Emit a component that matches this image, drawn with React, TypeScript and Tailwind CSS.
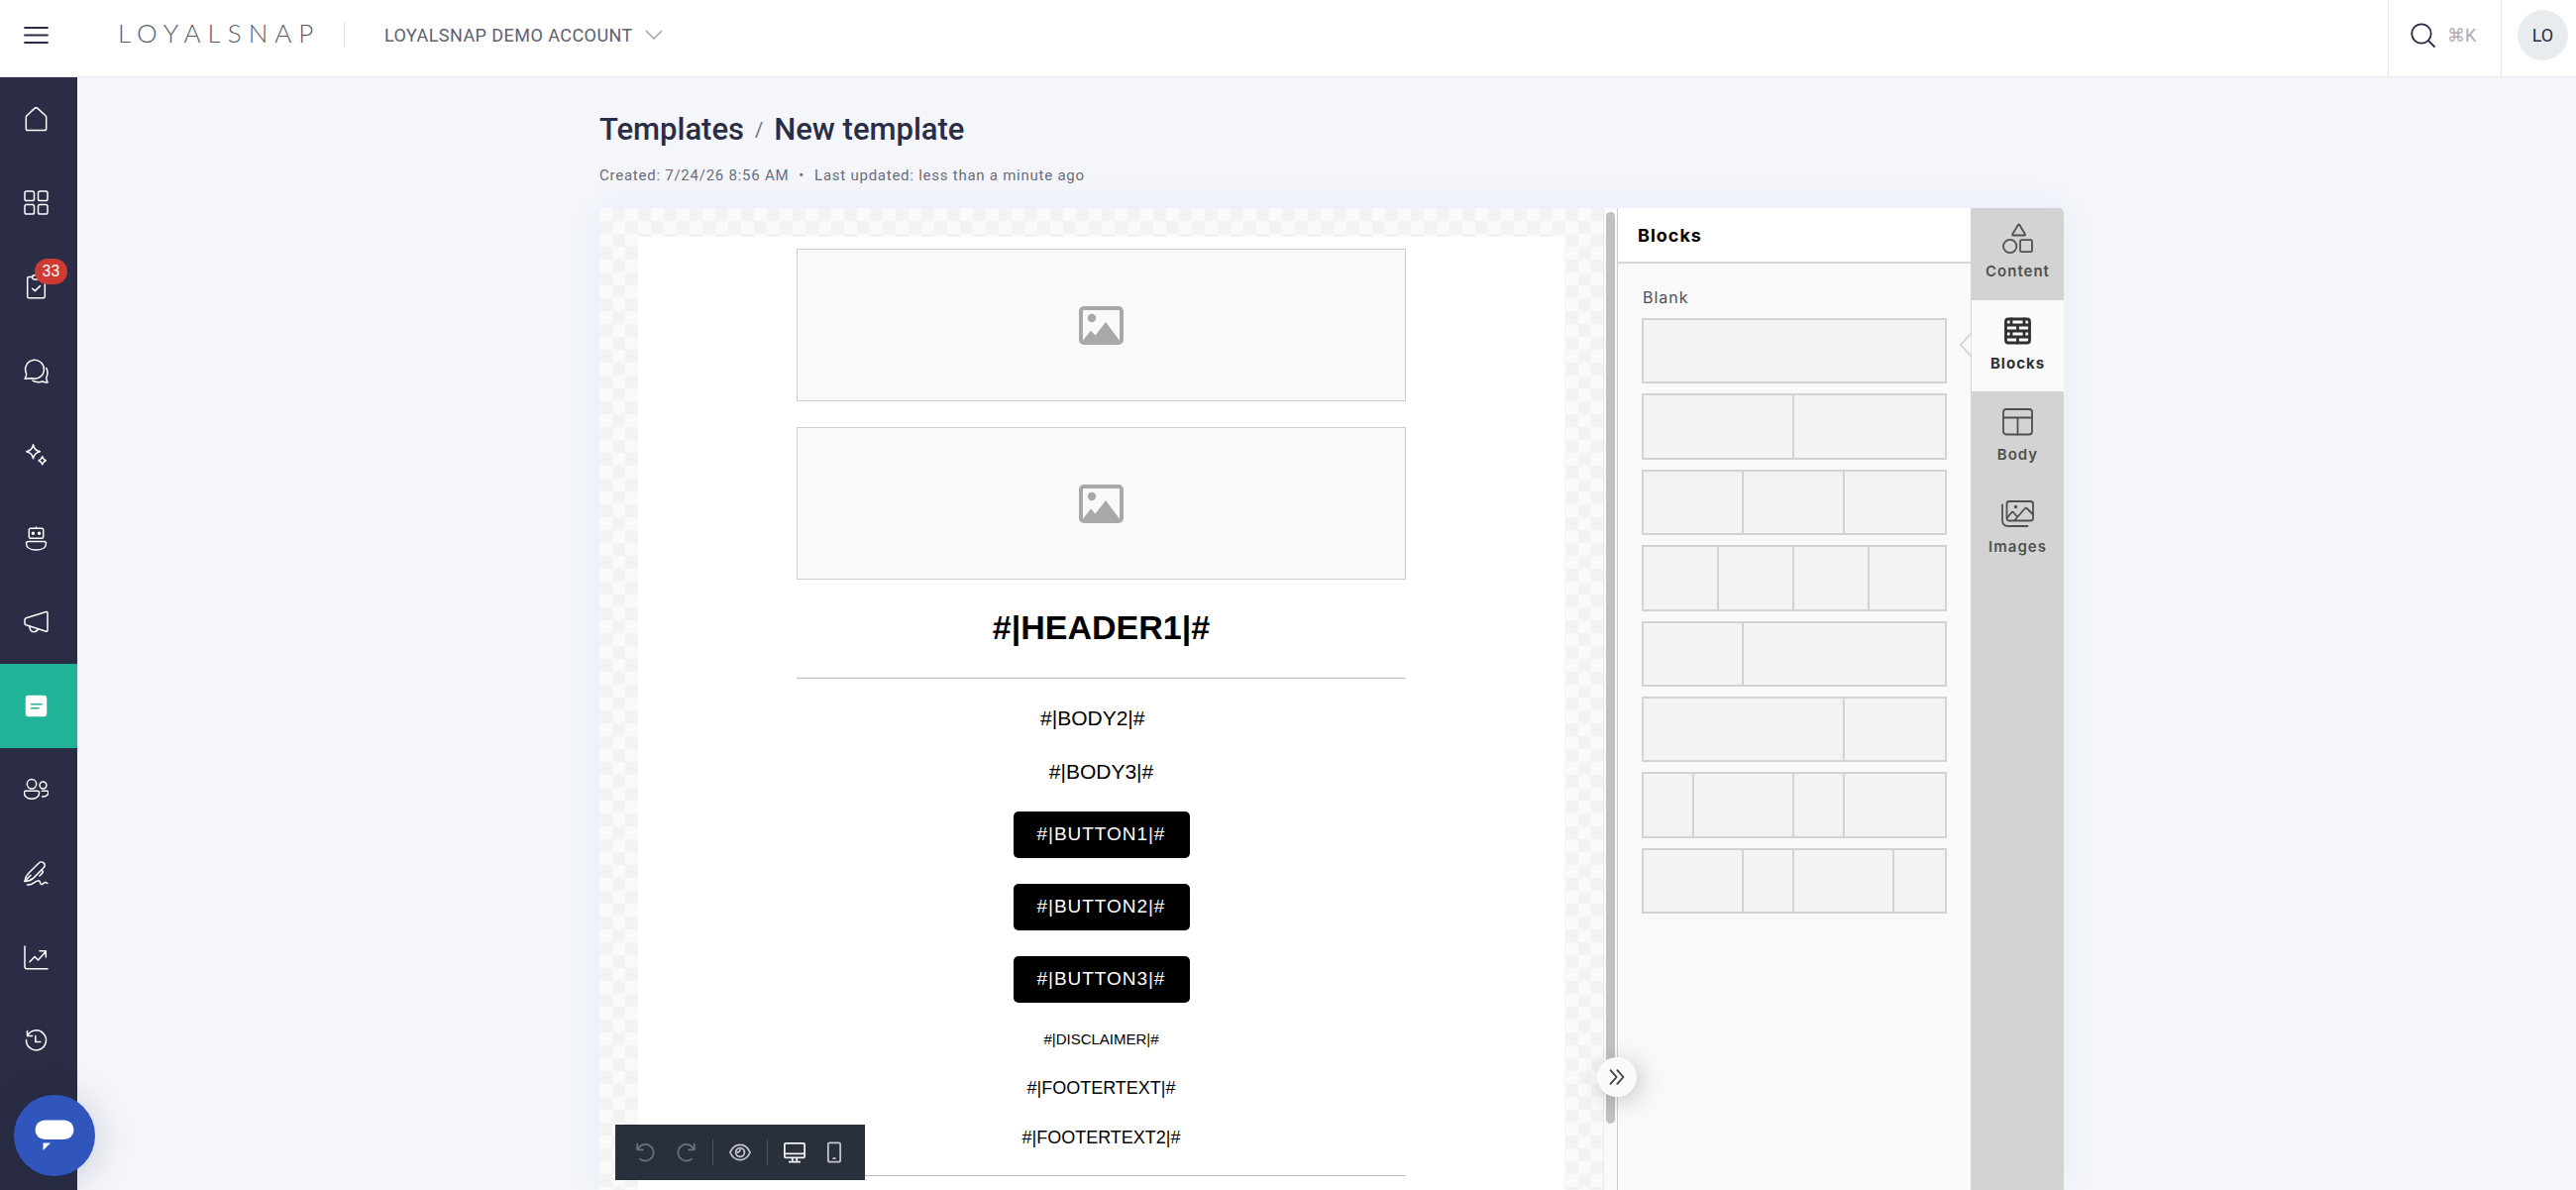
import type { ReactNode } from 'react';

interface IconProps {
  children: ReactNode;
  size?: number;
  width?: number;
  className?: string;
}

const Icon = ({ children, size = 25, width = 1.5, className = '' }: IconProps) => (
  <svg
    width={size}
    height={size}
    viewBox="0 0 25 25"
    fill="none"
    stroke="currentColor"
    strokeWidth={width}
    strokeLinecap="round"
    strokeLinejoin="round"
    className={className}
    aria-hidden="true"
  >
    {children}
  </svg>
);

const navItems = [
  {
    label: 'Home',
    icon: <path d="M2.3 10.6c0-.7.3-1.3.7-1.8l7.9-7.4c.9-.9 2.2-.9 3.1 0L22 8.8c.5.5.7 1.1.7 1.8v11.1c0 1.1-.8 1.9-1.9 1.9H4.2c-1.1 0-1.9-.8-1.9-1.9z" />,
  },
  {
    label: 'Apps',
    icon: (
      <>
        <rect x="1" y="1" width="9.5" height="9.5" rx="1.8" />
        <rect x="14.5" y="1" width="9.5" height="9.5" rx="1.8" />
        <rect x="1" y="14.5" width="9.5" height="9.5" rx="1.8" />
        <rect x="14.5" y="14.5" width="9.5" height="9.5" rx="1.8" />
      </>
    ),
  },
  {
    label: 'Tasks',
    badge: 33,
    icon: (
      <>
        <path d="M8.7 2.6H5.3c-1 0-1.6.7-1.6 1.6v18c0 1 .7 1.6 1.6 1.6h14.4c1 0 1.6-.7 1.6-1.6v-18c0-1-.7-1.6-1.6-1.6h-3.4" />
        <path d="M8.7 2.3c0-1 .8-1.5 1.7-1.5h4.2c1 0 1.7.6 1.7 1.5v1c0 1-.8 1.6-1.7 1.6h-4.2c-1 0-1.7-.7-1.7-1.6z" />
        <path d="m8.7 14.2 2.6 2.4 5.2-5" />
      </>
    ),
  },
  {
    label: 'Conversations',
    icon: (
      <>
        <path d="M2.5 14.8A9.4 9.4 0 1 1 8 19.7c-2 0-3.8.4-7 .6 1-1.6 2-3.5 1.5-5.5z" />
        <path d="M22.7 9.5c1.9 3.2 1.5 6.7 0 9.5.1 2 .6 3.5 1.3 5-2 .1-3.5-.2-5-1-3.4 1-7.2.7-10-.9" />
      </>
    ),
  },
  {
    label: 'Assistant',
    icon: (
      <>
        <path d="M9.5 2.8c1 4.2 2.3 5.7 6.8 7-4.5 1.3-5.8 2.8-6.8 7-1-4.2-2.3-5.7-6.8-7 4.5-1.3 5.8-2.8 6.8-7z" />
        <path d="M18.7 14.7c.6 2 1.4 3 3.6 4-2.2 1-3 2-3.6 4-.6-2-1.4-3-3.6-4 2.2-1 3-2 3.6-4z" />
      </>
    ),
  },
  {
    label: 'Bots',
    icon: (
      <>
        <rect x="5.3" y="2.3" width="14.4" height="10" rx="1.5" />
        <path d="M12.5 1v1.3M4.5 15.5h16c1.2 0 2 .8 2 1.9 0 4-3.8 6.6-10 6.6s-10-2.6-10-6.6c0-1.1.8-1.9 2-1.9z" />
        <circle cx="9.4" cy="7.3" r="1" fill="currentColor" />
        <circle cx="15.6" cy="7.3" r="1" fill="currentColor" />
      </>
    ),
  },
  {
    label: 'Campaigns',
    icon: (
      <>
        <path d="M2.3 8.7 22.5 2.5c.8-.2 1.5.3 1.5 1.1v17.5c0 .8-.7 1.3-1.5 1.1L2.3 15.800c-.8-.3-1.3-.8-1.3-1.600v-3.900c0-.8.5-1.300 1.300-1.600z" />
        <path d="M5.8 17c.2 3.2 2 5.7 4.5 5.7 1.8 0 3.3-1.3 4-2.8" />
      </>
    ),
  },
  {
    label: 'Templates',
    active: true,
    icon: (
      <>
        <rect x="2.5" y="2.5" width="20" height="20" rx="2.5" fill="#fff" />
        <path d="M7.5 10.7h10.5M7.5 14.7h7.5" stroke="#20b397" />
      </>
    ),
  },
  {
    label: 'Contacts',
    icon: (
      <>
        <circle cx="8" cy="7.3" r="4.7" />
        <circle cx="19.5" cy="8.5" r="3.4" />
        <path d="M2.3 14.2h11.4c1.2 0 1.9.8 1.9 1.9 0 3.6-2.8 6.2-7.6 6.2S.4 19.7.4 16.1c0-1.1.7-1.9 1.9-1.9z" />
        <path d="M18.3 14.2h4.9c.9 0 1.6.6 1.6 1.5 0 2.7-2.3 4.3-6.2 4.2" />
      </>
    ),
  },
  {
    label: 'Signatures',
    icon: (
      <>
        <path d="M1 20.5c.4-3.4 1.6-6 3.8-8.2L15.2 2c1.4-1.4 3.6-1.4 4.9-.1 1.4 1.3 1.4 3.5 0 4.9L9.8 17.1C7.5 19.3 4.7 20.2 1 20.5z" />
        <path d="M1 20.5 7 14.3M18 9.2l.9.8c.6.6.6 1.3 0 1.9l-3 3.1M3.5 24c5.500 1 8-4.600 11.500-4.300 2.500.2.5 3.900 2.800 3.900 1.700 0 2.200-2 4-2 .8 0 1.300.4 2 .9" />
      </>
    ),
  },
  {
    label: 'Reports',
    icon: (
      <>
        <path d="M1 1v20.5c0 1.4.9 2.3 2.3 2.3H24" />
        <path d="m6 16.7 5-5.2 3.5 3.5 7.5-8.5M16 5.8h6.3v6.2" />
      </>
    ),
  },
  {
    label: 'History',
    icon: (
      <>
        <path d="M3.5 7.5a10 10 0 1 1-1 4M3.5 2.5v5h5" />
        <path d="M11.8 7.5v6h5" />
      </>
    ),
  },
];

const blankBlocks = [
  ['col-span-12'],
  ['col-span-6', 'col-span-6'],
  ['col-span-4', 'col-span-4', 'col-span-4'],
  ['col-span-3', 'col-span-3', 'col-span-3', 'col-span-3'],
  ['col-span-4', 'col-span-8'],
  ['col-span-8', 'col-span-4'],
  ['col-span-2', 'col-span-4', 'col-span-2', 'col-span-4'],
  ['col-span-4', 'col-span-2', 'col-span-4', 'col-span-2'],
];

const panelTabs = [
  {
    label: 'Content',
    icon: (
      <>
        <path d="M17.1 2.7 11.3 12.2c-.4.7 0 1.3.7 1.3h11.2c.8 0 1.1-.6.7-1.3L18.2 2.7c-.3-.5-.8-.5-1.1 0z" />
        <circle cx="8.7" cy="24.5" r="6.7" />
        <rect x="19" y="18.2" width="12" height="12" rx="1.5" />
      </>
    ),
  },
  {
    label: 'Blocks',
    active: true,
    icon: (
      <>
        <rect x="4.5" y="5" width="24" height="24" rx="2.5" strokeWidth="2.8" />
        <path d="M4.5 11h24M4.5 17h24M4.5 23h24M10 5v6M23 5v6M16.5 11v6M10 17v6M23 17v6M16.5 23v6" strokeWidth="2.8" />
      </>
    ),
  },
  {
    label: 'Body',
    icon: (
      <>
        <rect x="2" y="4" width="29" height="25.5" rx="3" />
        <path d="M2 12.5h29M16.5 12.5v17" />
      </>
    ),
  },
  {
    label: 'Images',
    icon: (
      <>
        <rect x="5.5" y="4" width="26.5" height="19.5" rx="2.5" />
        <path d="M1 7.5v15.500c0 3.800 2.200 6 6 6h19.500M6 20.500l4-5c.8-1 1.600-1 2.500 0l3.500 4M13.500 23l10-11.500c.9-1 1.800-1 2.700 0l5.500 5.500" />
        <circle cx="14.500" cy="9.500" r="0.800" fill="currentColor" />
      </>
    ),
  },
];

const Header = () => (
  <header className="flex h-[78px] shrink-0 items-stretch border-b border-[#e8eaef] bg-white font-['Roboto',sans-serif]">
    <button type="button" aria-label="Menu" className="w-[78px] pb-[7px] pl-6 text-[#2b2d46]">
      <Icon width={1.8}>
        <path d="M1 5h23M1 12.5h23M1 20h23" />
      </Icon>
    </button>
    <div className="flex flex-1 items-center pb-[7px] pl-[41px]">
      <span className="w-[229px] border-r border-[#e3e4e8] pb-1 font-['Lato',sans-serif] text-[26px] leading-[22px] font-light tracking-[7px] text-[#5b5c6b]">
        LOYALSNAP
      </span>
      <button type="button" className="ml-10 flex items-center gap-3 text-[18px] tracking-wide text-[#5f6070]">
        LOYALSNAP DEMO ACCOUNT
        <svg width="18" height="10" viewBox="0 0 18 10" fill="none" stroke="#a3a4af" strokeWidth="1.5">
          <path d="m1 1 8 8 8-8" />
        </svg>
      </button>
    </div>
    <button type="button" className="flex w-[115px] items-center gap-3 border-x border-[#e8eaef] pb-[7px] pl-[22px]">
      <Icon width={1.8} className="text-[#2b2d46]">
        <circle cx="11" cy="11" r="9.7" />
        <path d="m18 18 6 6" />
      </Icon>
      <span className="text-[18px] text-[#a9aab8]">⌘K</span>
    </button>
    <div className="flex w-[75px] items-center pb-[7px] pl-4">
      <button type="button" className="h-[51px] w-[51px] rounded-full bg-[#e9ecef] text-[18px] text-[#2b2d46]">
        LO
      </button>
    </div>
  </header>
);

const Sidebar = () => (
  <aside className="w-[78px] shrink-0 bg-[#2b2d46]">
    <nav className="flex h-[1015px] flex-col">
      {navItems.map(({ label, icon, active, badge }) => (
        <a
          key={label}
          href="#"
          aria-label={label}
          className={`relative flex flex-1 items-center pl-6 text-white ${active ? 'bg-[#20b397]' : ''}`}
        >
          <Icon>{icon}</Icon>
          {badge && (
            <span className="absolute top-[14px] left-[35px] flex h-[26px] w-[33px] items-center justify-center rounded-full bg-[#cf3a33] font-['Roboto',sans-serif] text-[16px]">
              {badge}
            </span>
          )}
        </a>
      ))}
    </nav>
  </aside>
);

const ImagePlaceholder = () => (
  <div className="flex h-[154px] w-full shrink-0 items-center justify-center border border-[#cdcdcd] bg-[#f9f9f9]">
    <svg width="45" height="39" viewBox="0 0 45 39" aria-hidden="true">
      <rect x="2" y="2" width="41" height="35" rx="3" fill="none" stroke="#a8a8a8" strokeWidth="4" />
      <circle cx="13" cy="12" r="4.2" fill="#a8a8a8" />
      <path d="M3 36 12 24.5 16.5 29.5 27 16 42 36z" fill="#a8a8a8" />
    </svg>
  </div>
);

const Canvas = () => (
  <div className="flex min-w-0 flex-1 justify-center overflow-hidden bg-[conic-gradient(#f3f3f3_25%,#fafafa_0_50%,#f3f3f3_0_75%,#fafafa_0)] bg-size-[26px_26px] px-[39px] pt-[29px]">
    <div className="flex w-full justify-center bg-white pt-3">
      <div className="flex w-[615px] flex-col items-center gap-[26px] font-['Liberation_Sans',Arial,sans-serif] text-black">
        <ImagePlaceholder />
        <ImagePlaceholder />
        <h1 className="pb-[2px] text-[34px] leading-[44px] font-bold">#|HEADER1|#</h1>
        <hr className="h-[2px] w-full border-t-0 border-b border-[#c4c4c4] bg-[#f0f0f0]" />
        <p className="text-[21px] leading-7">#|BODY2|#&nbsp;&nbsp;&nbsp;</p>
        <p className="text-[21px] leading-7">#|BODY3|#</p>
        {['#|BUTTON1|#', '#|BUTTON2|#', '#|BUTTON3|#'].map((text) => (
          <button key={text} type="button" className="h-[47px] w-[178px] shrink-0 rounded-[5px] bg-black text-[19px] tracking-wider text-white">
            {text}
          </button>
        ))}
        <p className="text-[15px] leading-[22px]">#|DISCLAIMER|#</p>
        <p className="text-[18px] leading-6">#|FOOTERTEXT|#</p>
        <p className="text-[18px] leading-6">#|FOOTERTEXT2|#</p>
        <hr className="w-full border-t border-[#bbbbbb]" />
      </div>
    </div>
  </div>
);

const Toolbar = () => (
  <div className="absolute bottom-[10px] left-4 flex h-[56px] items-center bg-[#2a303b] px-[11px] text-[#c3c7cd]">
    <button type="button" aria-label="Undo" className="flex w-10 justify-center text-[#6d737d]">
      <Icon size={22} width={2}>
        <path d="M2.5 3v6.5H9M3 9a9.5 9.5 0 1 1 2.5 11" />
      </Icon>
    </button>
    <button type="button" aria-label="Redo" className="flex w-10 justify-center text-[#6d737d]">
      <Icon size={22} width={2}>
        <path d="M22.5 3v6.5H16M22 9a9.5 9.5 0 1 0-2.5 11" />
      </Icon>
    </button>
    <span className="mx-[7px] h-[26px] w-px bg-[#50565f]" />
    <button type="button" aria-label="Preview" className="flex w-10 justify-center">
      <Icon size={22} width={2}>
        <path d="M1 12.5C3.5 7 7.5 3.7 12.5 3.7S21.5 7 24 12.5c-2.5 5.5-6.5 8.8-11.5 8.8S3.5 18 1 12.5z" />
        <circle cx="12.5" cy="12.5" r="5" />
        <path d="M12.5 9.5a3 3 0 0 1-3 3" />
      </Icon>
    </button>
    <span className="mx-[7px] h-[26px] w-px bg-[#50565f]" />
    <button type="button" aria-label="Desktop" className="flex w-10 justify-center text-[#f1f2f4]">
      <Icon size={22} width={2}>
        <path d="M2.5 2h20c.8 0 1.5.7 1.5 1.5v13.5c0 .8-.7 1.5-1.5 1.5h-20C1.7 18.5 1 17.8 1 17V3.5C1 2.7 1.7 2 2.5 2zM1 14h23M10 18.5V23M15 18.5V23M6.5 23.5h12" />
      </Icon>
    </button>
    <button type="button" aria-label="Mobile" className="flex w-10 justify-center">
      <Icon size={22} width={2}>
        <rect x="5.5" y="1.5" width="14" height="22" rx="2" />
        <path d="M11.5 19.5h2" />
      </Icon>
    </button>
  </div>
);

const BlocksPanel = () => (
  <section className="relative z-10 w-[357px] shrink-0 border-l border-[#cccccc] bg-[#f9f9f9] font-['Inter',sans-serif]">
    <h2 className="flex h-[56px] items-center border-b-2 border-[#d9d9d9] bg-white pl-5 text-[18px] font-bold tracking-[1px] text-black">
      Blocks
    </h2>
    <div className="px-6 pt-[22px]">
      <h3 className="pl-px text-[16px] leading-6 tracking-[1px] text-[#505050]">Blank</h3>
      <div className="mt-[9px] flex h-[601px] flex-col gap-[10px]">
        {blankBlocks.map((columns, row) => (
          <div key={row} className="grid flex-1 grid-cols-12 border-2 border-[#d3d3d3] bg-[#f3f3f3]">
            {columns.map((span, i) => (
              <div key={i} className={`${span} border-[#d3d3d3] ${i < columns.length - 1 ? 'border-r-2' : ''}`} />
            ))}
          </div>
        ))}
      </div>
    </div>
    {/* pointer towards the active tab */}
    <svg width="12" height="24" viewBox="0 0 12 24" className="absolute top-[126px] right-[-1px]" aria-hidden="true">
      <path d="M11.5.5.8 12l10.7 11.5" fill="#fafafa" stroke="#cfcfcf" strokeWidth="1.5" />
    </svg>
    <button
      type="button"
      aria-label="Collapse panel"
      className="absolute top-[857px] left-[-21px] flex h-10 w-10 items-center justify-center rounded-full bg-[#fafafa] text-[#404040] shadow-[4px_4px_24px_rgba(0,0,0,0.2)]"
    >
      <Icon size={18} width={2.6}>
        <path d="m3.5 3 8.5 9.5L3.5 22M13 3l8.5 9.5L13 22" />
      </Icon>
    </button>
  </section>
);

const PanelTabs = () => (
  <div className="flex w-[94px] shrink-0 flex-col rounded-tr-[5px] bg-[#d3d3d3] font-['Inter',sans-serif]">
    <div className="flex h-[370px] flex-col">
      {panelTabs.map(({ label, icon, active }) => (
        <button
          key={label}
          type="button"
          className={`flex flex-1 flex-col items-center border-l border-[#d3d3d3] pt-[14px] text-[15px] leading-5 tracking-[1px] ${
            active ? 'bg-[#fafafa] font-bold text-[#303030]' : 'font-semibold text-[#505050]'
          }`}
        >
          <svg
            width="33"
            height="33"
            viewBox="0 0 33 33"
            fill="none"
            stroke="currentColor"
            strokeWidth="1.8"
            strokeLinecap="round"
            strokeLinejoin="round"
            className="mb-[7px]"
            aria-hidden="true"
          >
            {icon}
          </svg>
          {label}
        </button>
      ))}
    </div>
  </div>
);

const App = () => {
  return (
    <div className="flex h-screen flex-col overflow-hidden bg-[#f4f6fb]">
      <Header />
      <div className="flex min-h-0 flex-1">
        <Sidebar />
        <main className="flex min-w-0 flex-1 flex-col pt-[35px] pl-[10px]">
          <div className="mx-auto flex min-h-0 w-full max-w-[1478px] flex-1 flex-col">
            <div className="flex items-center font-['Roboto',sans-serif] text-[31px] leading-9 font-medium text-[#2b2d46]">
              <a href="#">Templates</a>
              <span className="mx-[11px] text-[20px] font-normal text-[#6f7080]">/</span>
              <h1>New template</h1>
            </div>
            <p className="mt-4 flex gap-[10px] font-['Roboto',sans-serif] text-[15px] leading-6 tracking-wider text-[#6b6c7b]">
              <span>Created: 7/24/26 8:56 AM</span>
              <span>•</span>
              <span>Last updated: less than a minute ago</span>
            </p>
            <div className="relative mt-[21px] flex min-h-0 flex-1 rounded-t-[5px] shadow-[0_0_36px_rgba(80,90,220,0.07)]">
              <Canvas />
              <div className="w-[14px] shrink-0 border-l border-[#e8e8e8] bg-[#fafafa] px-[2px] pt-1">
                <div className="h-[920px] w-[9px] rounded-full bg-[#c1c1c1]" />
              </div>
              <BlocksPanel />
              <PanelTabs />
              <Toolbar />
            </div>
          </div>
        </main>
      </div>
      <button
        type="button"
        aria-label="Open chat"
        className="fixed bottom-[14px] left-[14px] flex h-[82px] w-[82px] items-center justify-center rounded-full bg-[#3056bd] shadow-[0_4px_40px_rgba(0,20,40,0.2)]"
      >
        <svg width="40" height="32" viewBox="0 0 40 32" fill="#fff" aria-hidden="true">
          <rect x="0.5" y="0.5" width="39" height="19.5" rx="9.75" />
          <path d="M8.5 23.5h7.5l-7.5 7.5z" />
        </svg>
      </button>
    </div>
  );
};

export default App;
